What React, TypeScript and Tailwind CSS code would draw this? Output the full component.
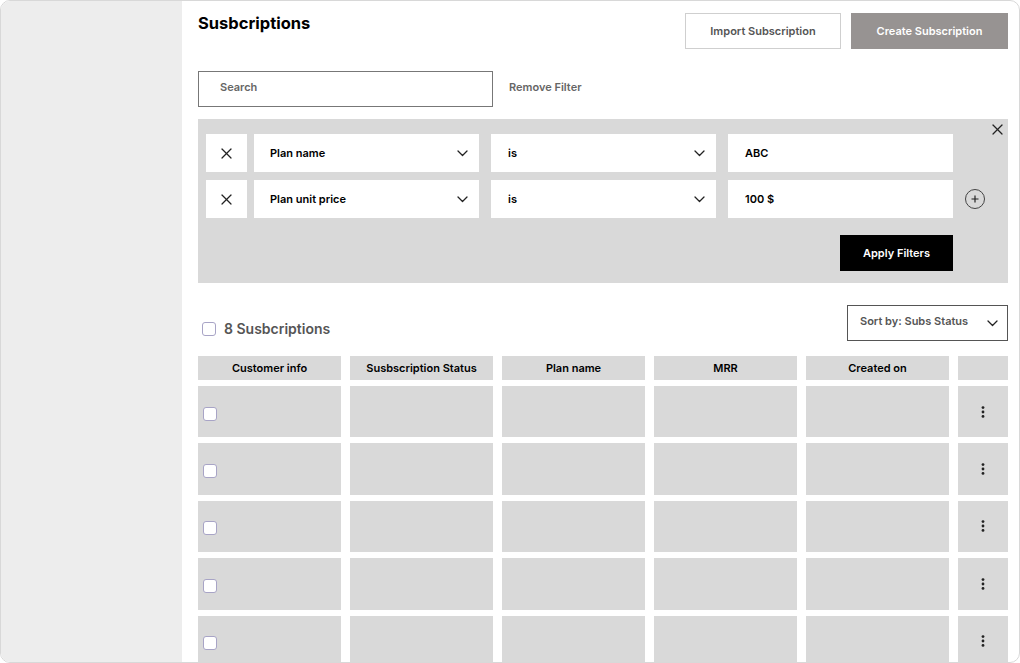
import React from "react";

const font = { fontFamily: "Inter, 'Noto Sans', sans-serif" };

function Chevron({ className = "" }: { className?: string }) {
  return (
    <svg width="11" height="7" viewBox="0 0 11 7" className={className} fill="none">
      <polyline points="1,1 5.5,5.5 10,1" stroke="#222" strokeWidth="1.3" strokeLinecap="round" strokeLinejoin="round" />
    </svg>
  );
}

function XIcon({ size = 11 }: { size?: number }) {
  return (
    <svg width={size} height={size} viewBox="0 0 11 11" fill="none">
      <line x1="1" y1="1" x2="10" y2="10" stroke="#222" strokeWidth="1.2" strokeLinecap="round" />
      <line x1="10" y1="1" x2="1" y2="10" stroke="#222" strokeWidth="1.2" strokeLinecap="round" />
    </svg>
  );
}

function Box() {
  return <div className="w-[14px] h-[14px] rounded-[3px] border border-[#a8a4c6] bg-white" />;
}

function Kebab() {
  return (
    <svg width="4" height="12" viewBox="0 0 4 12">
      <circle cx="2" cy="1.6" r="1.4" fill="#222" />
      <circle cx="2" cy="6" r="1.4" fill="#222" />
      <circle cx="2" cy="10.4" r="1.4" fill="#222" />
    </svg>
  );
}

function FilterRow({ field, op, value, plus }: { field: string; op: string; value: string; plus?: boolean }) {
  return (
    <div className="flex items-center h-[38px]">
      <div className="w-[41px] h-full bg-white flex items-center justify-center">
        <XIcon size={11} />
      </div>
      <div className="ml-[7px] w-[225px] h-full bg-white flex items-center justify-between pl-[16px] pr-[11px]">
        <span className="text-[11px] font-semibold text-black">{field}</span>
        <Chevron />
      </div>
      <div className="ml-[12px] w-[225px] h-full bg-white flex items-center justify-between pl-[17px] pr-[11px]">
        <span className="text-[11px] font-semibold text-black">{op}</span>
        <Chevron />
      </div>
      <div className="ml-[12px] w-[225px] h-full bg-white flex items-center pl-[17px]">
        <span className="text-[11px] font-semibold text-black">{value}</span>
      </div>
      {plus && (
        <div className="ml-[12px] w-[20px] h-[20px] rounded-full border border-[#444] flex items-center justify-center">
          <svg width="8" height="8" viewBox="0 0 8 8">
            <line x1="4" y1="0.5" x2="4" y2="7.5" stroke="#222" strokeWidth="1.2" />
            <line x1="0.5" y1="4" x2="7.5" y2="4" stroke="#222" strokeWidth="1.2" />
          </svg>
        </div>
      )}
    </div>
  );
}

const headers = ["Customer info", "Susbscription Status", "Plan name", "MRR", "Created on", ""];

export default function App() {
  const rows = [0, 1, 2, 3, 4];
  return (
    <div style={font} className="w-[1020px] h-[663px] bg-white">
      <div className="w-full h-full border border-[#d8d8d8] rounded-[10px] overflow-hidden flex">
        <div className="w-[181px] shrink-0 bg-[#ededed]" />
        <div className="flex-1 pl-[16px] pr-[11px] pt-[12px] flex flex-col">
          <div className="shrink-0 flex justify-between items-start">
            <h1 className="text-[16.5px] leading-[20px] font-bold text-black">Susbcriptions</h1>
            <div className="flex gap-[10px]">
              <button className="w-[156px] h-[36px] border border-[#cfcfcf] bg-white text-[11px] font-semibold text-[#555]">
                Import Subscription
              </button>
              <button className="w-[157px] h-[36px] bg-[#979392] text-[11px] font-semibold text-white">
                Create Subscription
              </button>
            </div>
          </div>

          <div className="shrink-0 mt-[22px] flex items-center">
            <div className="w-[295px] h-[36px] border border-[#777] flex items-center pl-[21px]">
              <span className="text-[11px] font-semibold text-[#666] -mt-[4px]">Search</span>
            </div>
            <span className="ml-[16px] text-[11px] font-semibold text-[#666] -mt-[4px]">Remove Filter</span>
          </div>

          <div className="shrink-0 relative mt-[12px] h-[164px] bg-[#d9d9d9] pl-[8px] pt-[15px] flex flex-col">
            <div className="absolute right-[5px] top-[5px]">
              <XIcon size={11} />
            </div>
            <FilterRow field="Plan name" op="is" value="ABC" />
            <div className="mt-[8px]">
              <FilterRow field="Plan unit price" op="is" value="100 $" plus />
            </div>
            <div className="mt-[17px] flex justify-end pr-[55px]">
              <button className="w-[113px] h-[36px] bg-black text-white text-[11px] font-semibold">Apply Filters</button>
            </div>
          </div>

          <div className="shrink-0 mt-[22px] flex justify-between items-start">
            <div className="flex items-center pt-[14px] pl-[4px]">
              <Box />
              <span className="ml-[8px] text-[14px] leading-[20px] font-semibold text-[#555]">8 Susbcriptions</span>
            </div>
            <div className="w-[161px] h-[36px] border border-[#555] flex items-center justify-between pl-[12px] pr-[9px]">
              <span className="text-[11px] font-semibold text-[#555] -mt-[4px]">Sort by: Subs Status</span>
              <Chevron />
            </div>
          </div>

          <div className="shrink-0 mt-[15px] grid grid-cols-[143px_143px_143px_143px_143px_1fr] gap-x-[9px] gap-y-[6px]">
            {headers.map((h, i) => (
              <div key={i} className="h-[24px] bg-[#d9d9d9] flex items-center justify-center text-[11px] font-semibold text-black">
                {h}
              </div>
            ))}
            {rows.map((r) => (
              <React.Fragment key={r}>
                <div className="h-[51.4px] bg-[#d9d9d9] flex items-center pl-[5px] pt-[4px]">
                  <Box />
                </div>
                <div className="h-[51.4px] bg-[#d9d9d9]" />
                <div className="h-[51.4px] bg-[#d9d9d9]" />
                <div className="h-[51.4px] bg-[#d9d9d9]" />
                <div className="h-[51.4px] bg-[#d9d9d9]" />
                <div className="h-[51.4px] bg-[#d9d9d9] flex items-center justify-center">
                  <Kebab />
                </div>
              </React.Fragment>
            ))}
          </div>
        </div>
      </div>
    </div>
  );
}
